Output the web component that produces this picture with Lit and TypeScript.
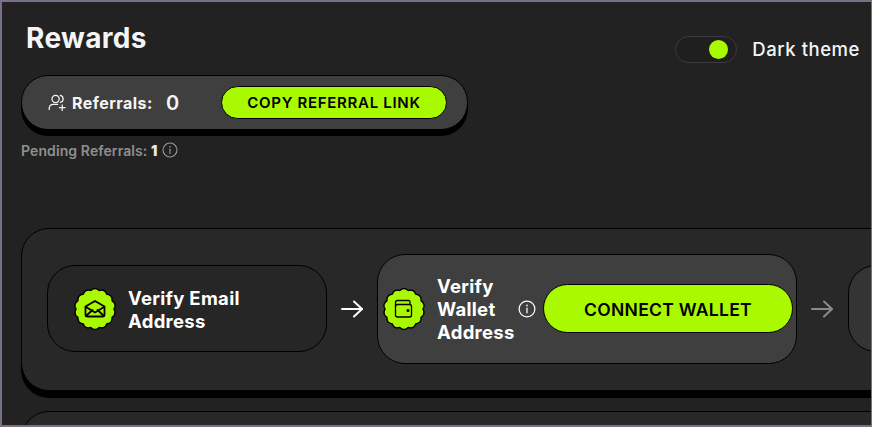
import { LitElement, html, css, svg } from "lit";
import { customElement } from "lit/decorators.js";

function badgePath(): string {
  const n = 14, cx = 21, cy = 21, r = 18.9, a = 1.5;
  let d = "";
  for (let i = 0; i < 420; i++) {
    const t = (i / 420) * Math.PI * 2;
    const rr = r + a * Math.abs(Math.cos((n * t) / 2));
    const x = cx + rr * Math.sin(t);
    const y = cy - rr * Math.cos(t);
    d += (i ? "L" : "M") + x.toFixed(2) + " " + y.toFixed(2);
  }
  return d + "Z";
}
const BADGE = badgePath();

const badge = (inner: unknown) => html`<svg class="badge" viewBox="0 0 42 42" width="42" height="42">
  <path d=${BADGE} fill="#a9f900" stroke="#000" stroke-width="1.4" stroke-linejoin="round"></path>
  ${inner}
</svg>`;

const mail = svg`<g fill="none" stroke="#000" stroke-width="1.8" stroke-linejoin="round" stroke-linecap="round">
  <path d="M11.500 18.500 21 13l9.500 5.500v8a2 2 0 0 1-2 2h-15a2 2 0 0 1-2-2z"/>
  <path d="M12 19l9 5.500 9-5.500"/><path d="M12 28l6.500-6M30 28l-6.500-6"/></g>`;
const wallet = svg`<g fill="none" stroke="#000" stroke-width="1.3" stroke-linejoin="round" stroke-linecap="round">
  <path d="M15 12.500h10.500a1.500 1.500 0 0 1 1.500 1.500v2.500"/>
  <rect x="12.500" y="16.500" width="16" height="12.500" rx="2"/>
  <path d="M12.500 18.500v-4a2 2 0 0 1 2-2"/>
  <circle cx="25" cy="22.500" r=".9" fill="#000"/></g>`;

const info = (size: number) => html`<svg class="info" viewBox="0 0 16 16" width=${size} height=${size} fill="none" stroke="currentColor" stroke-width="1.1" stroke-linecap="round">
  <circle cx="8" cy="8" r="7"/><path d="M8 7.200v4.200"/><path d="M8 4.700v.3" stroke-width="1.400"/></svg>`;

const arrow = (cls: string) => html`<svg class="arrow ${cls}" viewBox="0 0 24 20" width="24" height="20" fill="none" stroke="currentColor" stroke-width="2" stroke-linecap="round" stroke-linejoin="round">
  <path d="M2 10h20"/><path d="M14 2.500 22 10l-8 7.500"/></svg>`;

@customElement("app-root")
export class AppRoot extends LitElement {
  static styles = css`
    :host {
      display: block;
      box-sizing: border-box;
      height: 100vh;
      border: 2px solid #7b6e87;
      border-right-width: 1px;
      background: #222222;
      overflow: hidden;
      font-family: "Inter", "Liberation Sans", sans-serif;
      color: #f3f5f7;
    }
    .page { padding: 18px 11px 0 19px; }
    .head { display: flex; justify-content: space-between; align-items: flex-start; }
    h1 {
      margin: 1px 0 0 5px;
      font-size: 28px;
      line-height: 34px;
      font-weight: 700;
      letter-spacing: 0.35px;
    }
    .theme { display: flex; align-items: center; gap: 15px; margin-top: 16px; font-size: 18.500px; font-weight: 500; line-height: 27px; letter-spacing: .55px; }
    .toggle {
      box-sizing: border-box; width: 62px; height: 27px; border-radius: 14px;
      border: 1px solid #3c3c3c; background: #1f1f1f;
      display: flex; justify-content: flex-end; align-items: center; padding-right: 8px;
    }
    .toggle i { width: 19px; height: 19px; border-radius: 50%; background: #a9f900; display: block; }
    .pill {
      box-sizing: border-box; width: 447px; height: 55px; margin-top: 12px;
      border: 1px solid #000; border-radius: 27px; background: #3f3f3f;
      box-shadow: 0 6px 0 #000;
      display: flex; align-items: center; padding-left: 26px; padding-right: 20px;
    }
    .pill .ref-icon { margin-right: 5px; }
    .pill .lbl { font-size: 16px; font-weight: 700; letter-spacing: .45px; width: 94px; }
    .pill .num { font-size: 20px; font-weight: 600; width: 55px; }
    .btn {
      box-sizing: border-box; border: 1px solid #000; background: #a9f900; color: #000;
      border-radius: 999px; display: flex; align-items: center; justify-content: center;
      font-weight: 600; font-family: "Inter", sans-serif;
    }
    .copy { width: 226px; height: 33px; font-size: 15px; letter-spacing: .7px; }
    .pending {
      display: flex; align-items: center; gap: 5px; margin-top: 11px; height: 18px;
      font-size: 14px; font-weight: 600; color: #8f8f8f; letter-spacing: .1px;
    }
    .pending b { color: #e8e8e8; }
    .pending .info { color: #9a9a9a; }
    .panel {
      box-sizing: border-box; width: 1300px; height: 163px; margin-top: 69px;
      border: 1px solid #000; border-radius: 28px; background: #282828;
      box-shadow: 0 7px 0 #000;
      display: flex; align-items: center; padding: 0 0 2px 25px;
    }
    .panel.next { margin-top: 20px; }
    .card {
      box-sizing: border-box; flex: none; display: flex; align-items: center;
      border: 1px solid #000; border-radius: 28px;
    }
    .card.one { width: 280px; height: 87px; background: #262626; padding-left: 26px; }
    .card.two { width: 420px; height: 110px; background: #3f3f3f; padding-left: 5px; padding-right: 3px; }
    .card.three { width: 280px; height: 87px; background: #343434; }
    .badge { flex: none; margin: 1px 12px 0 0; display: block; }
    .title { flex: none; padding-top: 2px; font-size: 18.500px; font-weight: 700; line-height: 23px; letter-spacing: .3px; color: #fff; }
    .card.two .info { color: #fff; margin-left: 4px; margin-right: 7px; flex: none; }
    .card.two .title { width: 77px; }
    .connect { width: 250px; height: 49px; padding-top: 1px; font-size: 17.500px; letter-spacing: .3px; flex: none; }
    .arrow { flex: none; margin: 0 13px; color: #fff; display: block; }
    .arrow.dim { color: #8a8a8a; margin: 0 14px 0 13px; }
  `;

  render() {
    return html`<div class="page">
      <div class="head">
        <h1>Rewards</h1>
        <div class="theme"><div class="toggle"><i></i></div><span>Dark theme</span></div>
      </div>
      <div class="pill">
        <svg class="ref-icon" viewBox="0 0 20 18" width="19" height="17" fill="none" stroke="#f3f5f7" stroke-width="1.3" stroke-linecap="round">
          <circle cx="8" cy="5.200" r="3.800"/><path d="M13 1.500a3.800 3.800 0 0 1 0 7.400"/>
          <path d="M1.200 16.500v-1.500a4.500 4.500 0 0 1 4.500-4h4.500"/><path d="M15 11.500v6M12 14.500h6"/></svg>
        <span class="lbl">Referrals:</span>
        <span class="num">0</span>
        <div class="btn copy">COPY REFERRAL LINK</div>
      </div>
      <div class="pending"><span>Pending Referrals: <b>1</b></span>${info(16)}</div>
      <div class="panel">
        <div class="card one">${badge(mail)}<div class="title">Verify Email<br />Address</div></div>
        ${arrow("")}
        <div class="card two">${badge(wallet)}<div class="title">Verify Wallet Address</div>${info(18)}<div class="btn connect">CONNECT WALLET</div></div>
        ${arrow("dim")}
        <div class="card three"></div>
      </div>
      <div class="panel next"></div>
    </div>`;
  }
}
